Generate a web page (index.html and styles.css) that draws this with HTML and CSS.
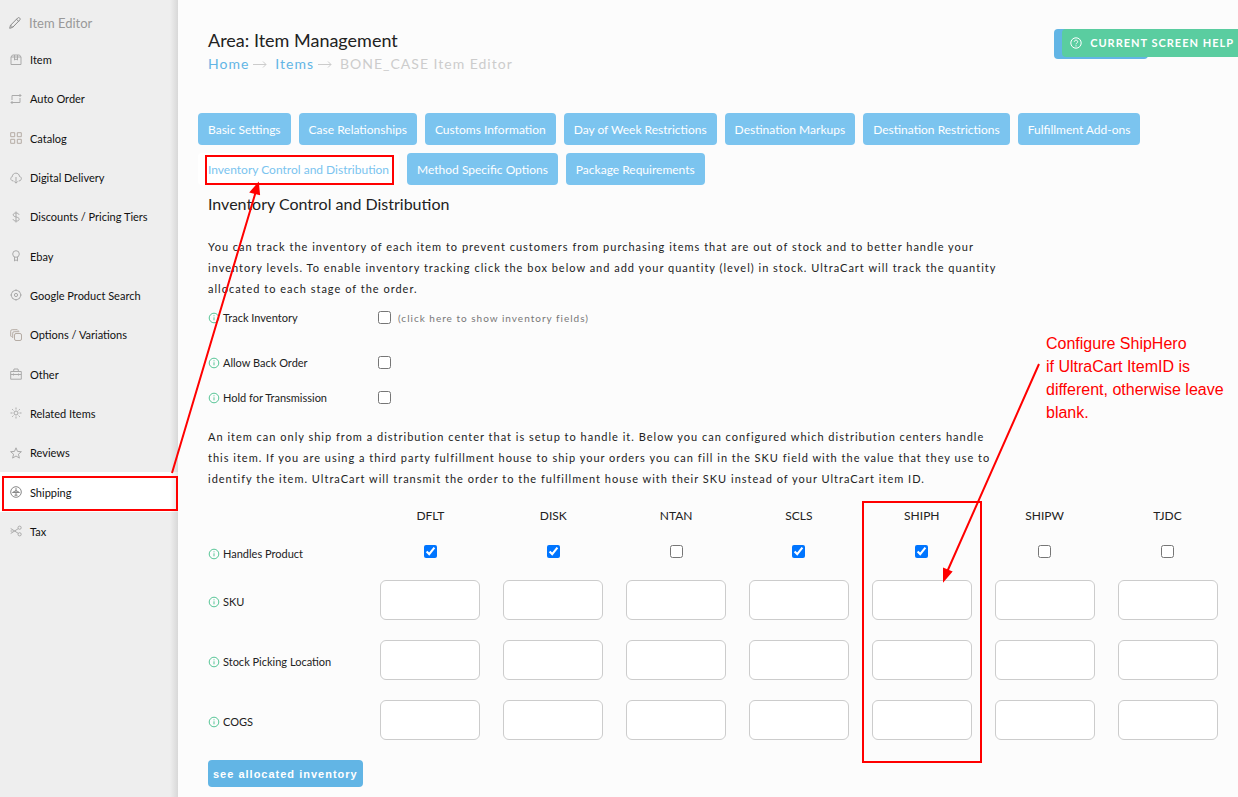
FILE: index.html
```html
<!DOCTYPE html>
<html lang="en">
<head>
  <meta charset="UTF-8" />
  <title>Item Editor - Shipping</title>
  <link rel="stylesheet" href="styles.css">
</head>
<body>
  <svg class="defs" aria-hidden="true">
    <symbol id="info" viewBox="0 0 12 12">
      <circle cx="6" cy="6" r="4.8" />
      <path d="M6 5.3v3M6 3.3v1" />
    </symbol>
  </svg>

  <div class="layout">
    <nav class="sidebar">
      <div class="sidebar-title">
        <svg class="icon" viewBox="0 0 12 12"><path d="M.7 11.3l.8-3L8.700 1c.6-.6 1.500-.5 2 .1.600.6.600 1.400 0 2L3.600 10.400zM7.500 2.200l2.200 2.200M1.700 8.200l2 2" /></svg>
        Item Editor
      </div>
      <ul class="menu">
        <li><a href="#"><svg class="icon" viewBox="0 0 12 12"><path d="M1 3h10v7.500H1zM1 3l1.500-2h7L11 3M4.500 1v5l1.500-1 1.500 1V1" /></svg>Item</a></li>
        <li><a href="#"><svg class="icon" viewBox="0 0 12 12"><path d="M2 7V2.500h9M9.500 1L11 2.500 9.500 4M10 5v4.500H1M2.500 8L1 9.500 2.500 11" /></svg>Auto Order</a></li>
        <li><a href="#"><svg class="icon tan" viewBox="0 0 12 12"><path d="M.7.7h4v4h-4zM7.300.7h4v4h-4zM.7 7.300h4v4h-4zM7.300 7.300h4v4h-4z" /></svg>Catalog</a></li>
        <li><a href="#"><svg class="icon" viewBox="0 0 12 12"><path d="M3.500 9C.2 9 0 5 2.300 4.700 2.500 0 9.200 0 9.500 4.500c2.700.3 2.500 4.500-.8 4.500M6 5v6M4.300 9.400L6 11.200l1.700-1.800" /></svg>Digital Delivery</a></li>
        <li><a href="#"><svg class="icon" viewBox="0 0 12 12"><path d="M9 3.700C8.500 1.500 3.200 1.300 3.200 3.800c0 2.700 6 1.700 6 4.400 0 2.600-5.700 2.400-6.200 0M6 .5v11" /></svg>Discounts / Pricing Tiers</a></li>
        <li><a href="#"><svg class="icon" viewBox="0 0 12 12"><circle cx="6" cy="4" r="3.300" /><path d="M4.500 7v4L6 9.800 7.500 11V7" /></svg>Ebay</a></li>
        <li><a href="#"><svg class="icon" viewBox="0 0 12 12"><circle cx="6" cy="6" r="4.700" /><circle cx="6" cy="6" r="1.600" /><path d="M6 .3v1M6 10.700v1M.3 6h1M10.700 6h1M2 2l.6.6M9.400 9.400l.6.6M10 2l-.6.6M2 10l.6-.6" /></svg>Google Product Search</a></li>
        <li><a href="#"><svg class="icon tan" viewBox="0 0 12 12"><rect x="4.500" y="4.500" width="7" height="7" rx="1.500" /><path d="M2.700 9V4.200Q2.700 2.700 4.200 2.700H9.300M.7 7V2.200Q.7.7 2.200.7H7.300M.7 7l1 1M7.300.7l1 1" /></svg>Options / Variations</a></li>
        <li><a href="#"><svg class="icon" viewBox="0 0 12 12"><path d="M.7 3.500h10.600v7.700H.7zM3.500 3.500L4 1h4l.5 2.500M.7 6.500h10.600M3.500 5.500v2M8.500 5.500v2" /></svg>Other</a></li>
        <li><a href="#"><svg class="icon" viewBox="0 0 12 12"><circle cx="6" cy="6" r="2" /><path d="M6 .5v2M6 9.500v2M.5 6h2M9.500 6h2M2.200 2.200l1.200 1.200M8.600 8.600l1.200 1.200M9.800 2.200L8.600 3.400M3.400 8.600L2.200 9.800" /></svg>Related Items</a></li>
        <li><a href="#"><svg class="icon" viewBox="0 0 12 12"><path d="M6 .8l1.500 3.600 3.900.3-3 2.500 1 3.900L6 9l-3.400 2.100 1-3.900-3-2.500 3.900-.3z" /></svg>Reviews</a></li>
        <li class="active"><a href="#"><svg class="icon" viewBox="0 0 12 12"><circle cx="6" cy="6" r="5.300" /><path d="M6 2v7.500M6 4.500L2.500 6.500h7zM4.500 9.200h3" /></svg>Shipping</a></li>
        <li><a href="#"><svg class="icon" viewBox="0 0 12 12"><circle cx="9.600" cy="2.700" r="1.600" /><circle cx="9.600" cy="9.300" r="1.600" /><path d="M.7 3.500l7.500 4.800M.7 8.500l7.500-4.800M.5 6h2" /></svg>Tax</a></li>
      </ul>
    </nav>

    <main class="content">
      <header class="page-header">
        <h1>Area: Item Management</h1>
        <div class="breadcrumb">
          <a href="#">Home</a>
          <svg class="crumb-arrow" viewBox="0 0 14 8"><path d="M0 4.500h13M10 1.500l3 3-3 3" /></svg>
          <a href="#">Items</a>
          <svg class="crumb-arrow" viewBox="0 0 14 8"><path d="M0 4.500h13M10 1.500l3 3-3 3" /></svg>
          <span>BONE_CASE Item Editor</span>
        </div>
      </header>

      <div class="tabs">
        <button>Basic Settings</button>
        <button>Case Relationships</button>
        <button>Customs Information</button>
        <button>Day of Week Restrictions</button>
        <button>Destination Markups</button>
        <button>Destination Restrictions</button>
        <button>Fulfillment Add-ons</button>
        <button class="selected">Inventory Control and Distribution</button>
        <button>Method Specific Options</button>
        <button>Package Requirements</button>
      </div>

      <section class="panel">
        <h2>Inventory Control and Distribution</h2>
        <p>You can track the inventory of each item to prevent customers from purchasing items that are out of stock and to better handle your inventory levels. To enable inventory tracking click the box below and add your quantity (level) in stock. UltraCart will track the quantity allocated to each stage of the order.</p>

        <div class="field first">
          <label for="track"><svg class="info"><use href="#info" /></svg>Track Inventory</label>
          <input type="checkbox" id="track">
          <span class="hint">(click here to show inventory fields)</span>
        </div>
        <div class="field">
          <label for="backorder"><svg class="info"><use href="#info" /></svg>Allow Back Order</label>
          <input type="checkbox" id="backorder">
        </div>
        <div class="field">
          <label for="hold"><svg class="info"><use href="#info" /></svg>Hold for Transmission</label>
          <input type="checkbox" id="hold">
        </div>

        <p class="second">An item can only ship from a distribution center that is setup to handle it. Below you can configured which distribution centers handle this item. If you are using a third party fulfillment house to ship your orders you can fill in the SKU field with the value that they use to identify the item. UltraCart will transmit the order to the fulfillment house with their SKU instead of your UltraCart item ID.</p>

        <table class="centers">
          <thead>
            <tr>
              <td class="name"></td>
              <th id="dflt">DFLT</th>
              <th id="disk">DISK</th>
              <th id="ntan">NTAN</th>
              <th id="scls">SCLS</th>
              <th id="shiph">SHIPH</th>
              <th id="shipw">SHIPW</th>
              <th id="tjdc">TJDC</th>
            </tr>
          </thead>
          <tbody>
            <tr class="handles">
              <th class="name" id="handles"><svg class="info"><use href="#info" /></svg>Handles Product</th>
              <td><input type="checkbox" aria-labelledby="handles dflt" checked></td>
              <td><input type="checkbox" aria-labelledby="handles disk" checked></td>
              <td><input type="checkbox" aria-labelledby="handles ntan"></td>
              <td><input type="checkbox" aria-labelledby="handles scls" checked></td>
              <td><input type="checkbox" aria-labelledby="handles shiph" checked></td>
              <td><input type="checkbox" aria-labelledby="handles shipw"></td>
              <td><input type="checkbox" aria-labelledby="handles tjdc"></td>
            </tr>
            <tr>
              <th class="name" id="sku"><svg class="info"><use href="#info" /></svg>SKU</th>
              <td><input type="text" aria-labelledby="sku dflt"></td>
              <td><input type="text" aria-labelledby="sku disk"></td>
              <td><input type="text" aria-labelledby="sku ntan"></td>
              <td><input type="text" aria-labelledby="sku scls"></td>
              <td><input type="text" aria-labelledby="sku shiph"></td>
              <td><input type="text" aria-labelledby="sku shipw"></td>
              <td><input type="text" aria-labelledby="sku tjdc"></td>
            </tr>
            <tr>
              <th class="name" id="stock"><svg class="info"><use href="#info" /></svg>Stock Picking Location</th>
              <td><input type="text" aria-labelledby="stock dflt"></td>
              <td><input type="text" aria-labelledby="stock disk"></td>
              <td><input type="text" aria-labelledby="stock ntan"></td>
              <td><input type="text" aria-labelledby="stock scls"></td>
              <td><input type="text" aria-labelledby="stock shiph"></td>
              <td><input type="text" aria-labelledby="stock shipw"></td>
              <td><input type="text" aria-labelledby="stock tjdc"></td>
            </tr>
            <tr>
              <th class="name" id="cogs"><svg class="info"><use href="#info" /></svg>COGS</th>
              <td><input type="text" aria-labelledby="cogs dflt"></td>
              <td><input type="text" aria-labelledby="cogs disk"></td>
              <td><input type="text" aria-labelledby="cogs ntan"></td>
              <td><input type="text" aria-labelledby="cogs scls"></td>
              <td><input type="text" aria-labelledby="cogs shiph"></td>
              <td><input type="text" aria-labelledby="cogs shipw"></td>
              <td><input type="text" aria-labelledby="cogs tjdc"></td>
            </tr>
          </tbody>
        </table>

        <button class="allocated">see allocated inventory</button>
      </section>
    </main>
  </div>

  <!-- help tab, stuck to the right edge -->
  <div class="help-back"></div>
  <button class="help">
    <svg viewBox="0 0 12 12"><circle cx="6" cy="6" r="5.200" /><path d="M4.300 4.800c0-2.200 3.400-2.200 3.400 0C7.700 6 6 6 6 7.300M6 8.300v1.200" /></svg>
    CURRENT SCREEN HELP
  </button>

  <!-- red notes drawn over the screen -->
  <svg class="notes" width="1238" height="797">
    <rect x="3" y="477" width="174" height="33" />
    <rect x="206" y="156" width="187" height="28" />
    <rect x="863" y="502" width="118" height="260" />
    <path d="M172 473L256 191M1039 364L947 572" />
    <path class="head" d="M258 184L251 192L259 194zM944 580L944 569L951 572z" />
  </svg>
  <p class="note-text">Configure ShipHero<br>if UltraCart ItemID is<br>different, otherwise leave<br>blank.</p>
</body>
</html>
```
FILE: styles.css
```css
* {
  box-sizing: border-box;
}
body {
  margin: 0;
  position: relative;
  font-family: Lato, sans-serif;
  font-size: 11px;
  color: #222;
  background: #fcfcfc;
}
a {
  color: #62b5e5;
  text-decoration: none;
}
.defs {
  display: none;
}
.layout {
  display: flex;
  min-height: 100vh;
}

/* sidebar */
.sidebar {
  flex: 0 0 178px;
  background: linear-gradient(to left, #d8d8d8, #eee 8px);
}
.sidebar-title {
  display: flex;
  align-items: center;
  gap: 8px;
  height: 40px;
  padding: 5px 0 0 9px;
  font-size: 13px;
  color: #999;
}
.menu {
  display: grid;
  grid-auto-rows: 1fr;
  min-height: 511px;
  margin: 0;
  padding: 0;
  list-style: none;
}
.menu a {
  display: flex;
  align-items: center;
  gap: 8px;
  height: 100%;
  padding-left: 10px;
  color: #111;
}
.menu .active {
  background: linear-gradient(to left, #e6e6e6, #fff 8px);
}
.icon {
  width: 12px;
  height: 12px;
  fill: none;
  stroke: #aaa;
}
.icon.tan {
  stroke: #b5aca4;
}
.sidebar-title .icon,
.active .icon {
  stroke: #888;
}

/* content */
.content {
  flex: 1;
  min-width: 0;
  padding: 29px 9px 10px 20px;
}
.page-header {
  padding-left: 10px;
}
h1 {
  margin: 0 0 1px;
  font-size: 18px;
  line-height: 22px;
  font-weight: 400;
}
.breadcrumb {
  display: flex;
  align-items: center;
  gap: 4px;
  line-height: 24px;
  font-size: 14px;
  letter-spacing: 1px;
  color: #ccc;
}
.crumb-arrow {
  width: 14px;
  height: 8px;
  margin-right: 4px;
  fill: none;
  stroke: #ccc;
}
.tabs {
  display: flex;
  flex-wrap: wrap;
  gap: 8px;
  margin-top: 37px;
}
.tabs button {
  height: 32px;
  padding: 0 10px;
  border: none;
  border-radius: 4px;
  font-family: inherit;
  font-size: 12px;
  color: #fff;
  background: #7bc4ef;
}
.tabs .selected {
  color: #7bc4ef;
  background: #fff;
}
.panel {
  padding-left: 10px;
}
h2 {
  margin: 8px 0 0;
  font-size: 16px;
  line-height: 22px;
  font-weight: 400;
}
.panel p {
  max-width: 800px;
  margin: 21px 0 8px;
  line-height: 21px;
  letter-spacing: 1px;
}
.panel .second {
  margin: 11px 0 8px;
}
.field {
  display: flex;
  align-items: center;
  height: 35px;
}
.field.first {
  height: 21px;
  margin-bottom: 17px;
}
.field label {
  display: flex;
  align-items: center;
  width: 170px;
}
input[type="checkbox"] {
  width: 13px;
  height: 13px;
  margin: 0;
}
.info {
  width: 12px;
  height: 12px;
  margin-right: 3px;
  vertical-align: -2px;
  fill: none;
  stroke: #56c596;
}
.hint {
  margin-left: 7px;
  font-size: 10px;
  letter-spacing: 1px;
  color: #777;
}
.centers {
  width: 100%;
  table-layout: fixed;
  border-collapse: collapse;
}
.centers th,
.centers td {
  height: 60px;
  padding: 0;
  font-weight: 400;
  text-align: center;
}
.centers thead th,
.centers thead td {
  height: 36px;
  font-size: 12px;
}
.centers .handles > * {
  height: 37px;
}
.centers .name {
  width: 161px;
  padding-top: 3px;
  text-align: left;
}
.centers input {
  display: block;
  margin: 0 auto;
}
.centers input[type="text"] {
  width: 100px;
  height: 40px;
  border: 1px solid #ccc;
  border-radius: 6px;
  background: #fff;
}
.allocated {
  height: 27px;
  margin-top: 10px;
  padding: 0 5px;
  border: none;
  border-radius: 4px;
  font-family: "Liberation Sans", Arial, sans-serif;
  font-size: 11px;
  font-weight: 700;
  letter-spacing: 1px;
  color: #fff;
  background: #62b5e5;
}

/* help tab */
.help-back {
  position: absolute;
  top: 29px;
  right: 90px;
  width: 94px;
  height: 30px;
  border-radius: 4px;
  background: #62b5e5;
}
.help {
  position: absolute;
  top: 29px;
  right: 0;
  display: flex;
  align-items: center;
  gap: 8px;
  height: 28px;
  padding: 0 4px 1px 8px;
  border: none;
  border-radius: 4px 0 0 4px;
  font-family: inherit;
  font-size: 11px;
  font-weight: 700;
  letter-spacing: 1px;
  color: #fff;
  background: #5acda0;
}
.help svg {
  width: 12px;
  height: 12px;
  fill: none;
  stroke: #fff;
}

/* notes */
.notes {
  position: absolute;
  top: 0;
  left: 0;
  fill: none;
  stroke: #f00;
  stroke-width: 2;
  pointer-events: none;
}
.notes .head {
  fill: #f00;
}
.note-text {
  position: absolute;
  top: 332px;
  left: 1046px;
  margin: 0;
  font-family: "Liberation Sans", Arial, sans-serif;
  font-size: 16px;
  line-height: 23px;
  color: #f00;
}
```
